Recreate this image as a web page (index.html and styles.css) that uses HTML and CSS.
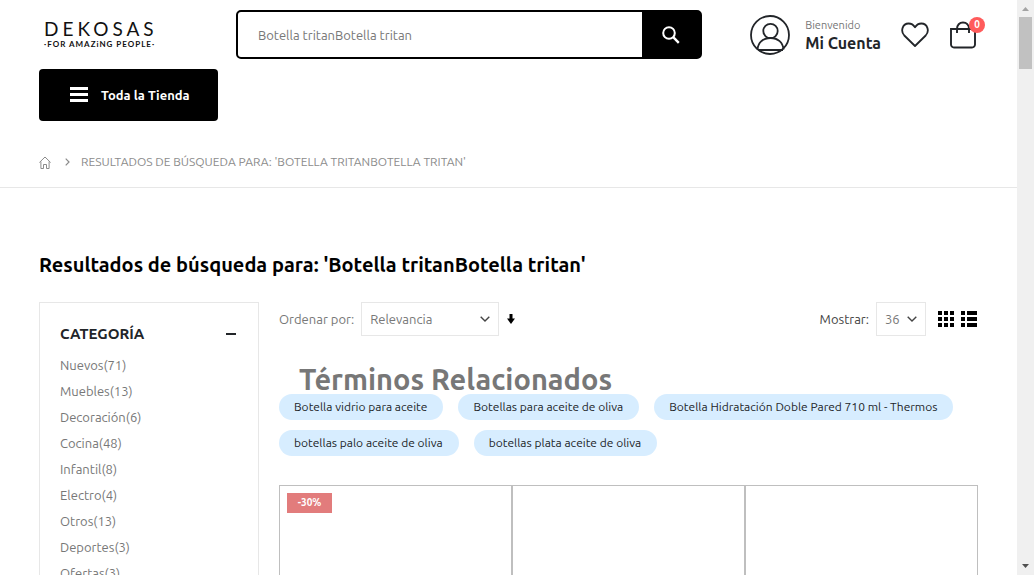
FILE: index.html
```html
<!DOCTYPE html>
<html lang="es">
<head>
<meta charset="utf-8">
<meta name="viewport" content="width=device-width, initial-scale=1">
<title>Dekosas - Resultados de búsqueda</title>
<link rel="stylesheet" href="styles.css">
</head>
<body>
<div class="window">
  <div class="page">
    <header class="header container">
      <div class="header-main">
        <a class="logo" href="#"><span class="logo-name">DEKOSAS</span><span class="logo-tag">·FOR AMAZiNG PEOPLE·</span></a>
        <form class="search">
          <input class="search-input" type="text" aria-label="Buscar" value="Botella tritanBotella tritan">
          <button class="search-button" type="button" aria-label="Buscar">
            <svg width="18" height="18" viewBox="0 0 18 18" fill="none" stroke="#fff"><circle cx="7" cy="7" r="5.800" stroke-width="2"/><path d="M11.200 11.200l5.600 5.600" stroke-width="2.400"/></svg>
          </button>
        </form>
        <div class="account">
          <a class="user" href="#">
            <svg class="user-icon" width="40" height="40" viewBox="0 0 40 40" fill="none" stroke="#222529" stroke-width="1.8"><circle cx="20" cy="20" r="19"/><circle cx="20.500" cy="16" r="7.200"/><path d="M7.500 34.500c.5-7 5.500-11.500 13-11.500s12.500 4.500 13 11.500M8 35h25"/></svg>
            <span class="user-text"><span class="welcome">Bienvenido</span><strong class="user-name">Mi Cuenta</strong></span>
          </a>
          <a class="wish" href="#" aria-label="Favoritos">
            <svg width="28" height="26" viewBox="0 0 28 26" fill="none" stroke="#222529" stroke-width="1.8" stroke-linejoin="round"><path d="M14 24L3.300 13.500C-.8 9.200 1.500 1.500 7.600 1.500 10.500 1.500 12.600 3 14 5.300 15.400 3 17.500 1.500 20.400 1.500c6.100 0 8.400 7.700 4.300 12z"/></svg>
          </a>
          <a class="cart" href="#" aria-label="Carrito">
            <svg width="26" height="28" viewBox="0 0 26 28" fill="none" stroke="#222529" stroke-width="1.900"><path d="M1 8h24v15.500a3 3 0 0 1-3 3H4a3 3 0 0 1-3-3zM7 12V8c0-4 2.500-6.500 6-6.500s6 2.500 6 6.500v4"/></svg>
            <span class="badge">0</span>
          </a>
        </div>
      </div>
      <button class="menu-button" type="button">
        <svg width="18" height="16" viewBox="0 0 18 16" fill="#fff"><path d="M0 0h18v3H0zM0 6h18v3H0zM0 12h18v3H0z"/></svg>
        <span>Toda la Tienda</span>
      </button>
    </header>
    <nav class="breadcrumbs" aria-label="Ruta">
      <div class="container crumbs">
        <a class="home" href="#" aria-label="Inicio"><svg width="12" height="13" viewBox="0 0 12 13" fill="none" stroke="#8b8b8b"><path d="M.4 6.500L6 1l5.600 5.500M1.900 5.500v7H4.500v-4h3v4h2.600v-7"/></svg></a>
        <svg class="crumb-sep" width="5" height="8" viewBox="0 0 5 8" fill="none" stroke="#8b8b8b" stroke-width="1.200"><path d="M.7.7L4 4 .7 7.300"/></svg>
        <span>RESULTADOS DE BÚSQUEDA PARA: 'BOTELLA TRITANBOTELLA TRITAN'</span>
      </div>
    </nav>
    <main class="container">
      <h1 class="title">Resultados de búsqueda para: 'Botella tritanBotella tritan'</h1>
      <div class="columns">
        <aside class="filters">
          <h2 class="filter-title"><span>CATEGORÍA</span><button class="collapse" type="button" aria-label="Contraer"><svg width="10" height="2" viewBox="0 0 10 2"><path d="M0 0h10v2H0z" fill="#222529"/></svg></button></h2>
          <ul class="filter-list">
            <li><a href="#">Nuevos(71)</a></li>
            <li><a href="#">Muebles(13)</a></li>
            <li><a href="#">Decoración(6)</a></li>
            <li><a href="#">Cocina(48)</a></li>
            <li><a href="#">Infantil(8)</a></li>
            <li><a href="#">Electro(4)</a></li>
            <li><a href="#">Otros(13)</a></li>
            <li><a href="#">Deportes(3)</a></li>
            <li><a href="#">Ofertas(3)</a></li>
          </ul>
        </aside>
        <section class="results">
          <div class="toolbar">
            <label for="sort">Ordenar por:</label>
            <span class="select-wrap"><select id="sort" class="select sort"><option>Relevancia</option></select><svg class="chevron" width="10" height="6" viewBox="0 0 10 6" fill="none" stroke="#444" stroke-width="1.400"><path d="M.7.7L5 5 9.300.7"/></svg></span>
            <a class="direction" href="#" aria-label="Orden descendente"><svg width="8" height="10" viewBox="0 0 8 10"><path d="M2.500 0h3v4.500H8L4 10 0 4.500h2.500z"/></svg></a>
            <label class="limit-label" for="limit">Mostrar:</label>
            <span class="select-wrap"><select id="limit" class="select limit"><option>36</option></select><svg class="chevron" width="10" height="6" viewBox="0 0 10 6" fill="none" stroke="#444" stroke-width="1.400"><path d="M.7.7L5 5 9.300.7"/></svg></span>
            <div class="modes">
              <a href="#" aria-label="Cuadrícula"><svg width="16" height="16" viewBox="0 0 16 16"><path d="M0 0h4v4H0zM6 0h4v4H6zM12 0h4v4h-4zM0 6h4v4H0zM6 6h4v4H6zM12 6h4v4h-4zM0 12h4v4H0zM6 12h4v4H6zM12 12h4v4h-4z"/></svg></a>
              <a href="#" aria-label="Lista"><svg width="16" height="16" viewBox="0 0 16 16"><path d="M0 0h4v4H0zM6 0h10v4H6zM0 6h4v4H0zM6 6h10v4H6zM0 12h4v4H0zM6 12h10v4H6z"/></svg></a>
            </div>
          </div>
          <h2 class="related-title">Términos Relacionados</h2>
          <div class="terms">
            <a href="#">Botella vidrio para aceite</a>
            <a href="#">Botellas para aceite de oliva</a>
            <a href="#">Botella Hidratación Doble Pared 710 ml - Thermos</a>
            <a href="#">botellas palo aceite de oliva</a>
            <a href="#">botellas plata aceite de oliva</a>
          </div>
          <div class="products">
            <article class="product"><span class="discount">-30%</span></article>
            <article class="product"></article>
            <article class="product"></article>
          </div>
        </section>
      </div>
    </main>
  </div>
  <div class="scrollbar" aria-hidden="true">
    <svg width="17" height="17" viewBox="0 0 17 17"><path d="M5 11h7L8.500 7z" fill="#a3a3a3"/></svg>
    <div class="thumb"></div>
    <svg class="arrow-down" width="17" height="17" viewBox="0 0 17 17"><path d="M5 6h7l-3.500 4z" fill="#505050"/></svg>
  </div>
</div>
</body>
</html>
```
FILE: styles.css
```css
* { box-sizing: border-box; }
body {
  margin: 0;
  background: #fff;
  color: #777;
  font: 13px/26px "Ubuntu", "Noto Sans", sans-serif;
}
a { color: inherit; text-decoration: none; }
svg { display: block; flex: none; }
button, input, select { font: inherit; }
button { border: 0; padding: 0; cursor: pointer; }

.window { display: grid; grid-template-columns: 1fr 17px; height: 100vh; overflow: hidden; }
.page { overflow: hidden; }
.container { padding: 0 39px; }

.header-main { display: flex; align-items: center; padding-top: 10px; }
.logo { display: flex; flex-direction: column; width: 197px; padding: 0 0 2px 5px; color: #111; font-family: Lato, sans-serif; }
.logo-name { font-size: 19px; line-height: 20px; letter-spacing: 4px; }
.logo-tag { font-size: 8px; font-weight: 700; line-height: 10px; letter-spacing: 1px; }
.search { display: flex; flex: 0 1 466px; height: 49px; border: 2px solid #000; border-radius: 5px; background: #000; }
.search-input { flex: 1; min-width: 0; border: 0; border-radius: 3px 0 0 3px; padding: 0 20px; background: #fff; color: #777; outline: 0; }
.search-button { display: grid; place-items: center; width: 58px; background: #000; }
.account { display: flex; align-items: center; margin-left: auto; padding-right: 2px; color: #222529; }
.user { display: flex; align-items: center; gap: 15px; }
.user-text { display: flex; flex-direction: column; }
.welcome { color: #777; font-size: 11px; line-height: 16px; }
.user-name { font-size: 16px; line-height: 20px; }
.wish { margin-left: 20px; }
.cart { position: relative; margin-left: 21px; }
.badge { position: absolute; top: -4px; right: -9px; width: 16px; height: 16px; border-radius: 50%; background: #ff5b5b; color: #fff; font-size: 10px; font-weight: 700; line-height: 16px; text-align: center; }
.menu-button { display: flex; align-items: center; gap: 13px; margin-top: 10px; padding: 0 28px 0 31px; height: 52px; border-radius: 4px; background: #000; color: #fff; font-weight: 700; }

.breadcrumbs { margin-top: 28px; padding-bottom: 12px; border-bottom: 1px solid #e7e7e7; font-size: 12px; color: #8b8b8b; }
.crumbs { display: flex; align-items: center; }
.crumb-sep { margin: 0 11px 0 14px; }

.title { margin: 60px 0 20px; color: #000; font-size: 20px; line-height: 34px; font-weight: 700; }
.columns { display: grid; grid-template-columns: 220px 1fr; gap: 20px; }
.filters { border: 1px solid #e7e7e7; padding: 18px 20px; }
.filter-title { display: flex; align-items: center; justify-content: space-between; margin: 0 0 5px; padding-right: 2px; color: #222529; font-size: 15px; line-height: 26px; font-weight: 700; }
.collapse { background: none; }
.filter-list { margin: 0; padding: 0; list-style: none; }

.toolbar { display: flex; align-items: center; height: 34px; padding-right: 1px; }
.select-wrap { position: relative; margin-left: 7px; }
.select { display: block; height: 34px; padding: 0 8px; border: 1px solid #e7e7e7; border-radius: 0; background: #fff; color: #777; appearance: none; }
.sort { width: 138px; }
.limit { width: 50px; }
.chevron { position: absolute; top: 14px; right: 9px; pointer-events: none; }
.direction { margin-left: 8px; }
.limit-label { margin-left: auto; color: #444; }
.modes { display: flex; gap: 7px; margin-left: 12px; color: #000; }

.related-title { margin: 30px 20px 2px; font-size: 29px; line-height: 26px; font-weight: 700; }
.terms { display: flex; flex-wrap: wrap; gap: 10px 15px; color: #222529; font-size: 12px; }
.terms a { padding: 0 16px 0 15px; border-radius: 13px; background: #d7edff; line-height: 26px; }
.products { display: grid; grid-template-columns: repeat(3, 1fr); margin-top: 29px; }
.product { height: 330px; padding: 7px; border: 1px solid #bfbfbf; }
.discount { display: block; width: 45px; background: #e27c7c; color: #fff; font-size: 10px; font-weight: 700; line-height: 20px; text-align: center; }

.scrollbar { display: flex; flex-direction: column; background: #f0f0f0; }
.thumb { height: 52px; margin: 0 2px; background: #c1c1c1; }
.arrow-down { margin-top: auto; }
```
